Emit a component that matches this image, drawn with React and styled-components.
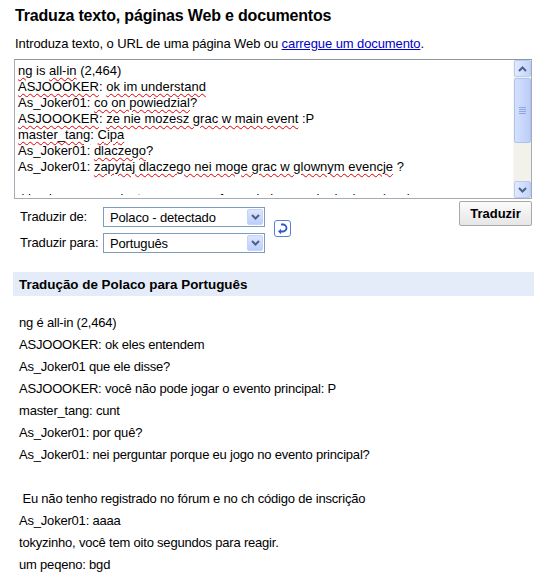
import React from "react";
import styled, { createGlobalStyle } from "styled-components";

const GlobalStyle = createGlobalStyle`
  body {
    margin: 0;
    background: #fff;
    font-family: "Liberation Sans", Arial, sans-serif;
    color: #000;
  }
`;

const Page = styled.div`
  width: 534px;
  padding-left: 14px;
  box-sizing: border-box;
`;

const Title = styled.h1`
  margin: 6px 0 0 1px;
  font-size: 16px;
  line-height: 20px;
  font-weight: bold;
  letter-spacing: -0.18px;
`;

const Intro = styled.div`
  margin: 10px 0 0 1px;
  font-size: 13px;
  line-height: 16px;
  letter-spacing: -0.1px;
  a {
    color: #0000cc;
    text-decoration: underline;
  }
`;

const SourceBox = styled.div`
  margin-top: 7px;
  width: 518px;
  height: 140px;
  box-sizing: border-box;
  border: 1px solid #a5acb5;
  border-top-color: #8e959e;
  display: flex;
  overflow: hidden;
`;

const SourceText = styled.div`
  flex: 1;
  margin-bottom: 3px;
  padding: 3px 3px 0;
  font-size: 13px;
  line-height: 16px;
  white-space: pre;
  overflow: hidden;
`;

const Typo = styled.span`
  text-decoration: underline wavy #e00000;
  text-decoration-thickness: 1px;
  text-underline-offset: 2px;
`;

const Scrollbar = styled.div`
  width: 17px;
  display: flex;
  flex-direction: column;
  background: #f2f1ea;
  border-left: 1px solid #f6f6f2;
`;

const ScrollButton = styled.div`
  height: 17px;
  box-sizing: border-box;
  border: 1px solid #b9cbf3;
  border-radius: 2px;
  background: linear-gradient(to right, #e1eafe, #c2d3fc);
  display: flex;
  align-items: center;
  justify-content: center;
`;

const Thumb = styled.div`
  margin-top: 1px;
  height: 65px;
  box-sizing: border-box;
  border: 1px solid #aec2f1;
  border-radius: 2px;
  background: linear-gradient(to right, #d4e0fd, #bccdf9);
  display: flex;
  align-items: center;
  justify-content: center;
`;

const Track = styled.div`
  flex: 1;
`;

const Controls = styled.div`
  margin-top: 8px;
  display: flex;
  align-items: flex-start;
`;

const LangGrid = styled.div`
  display: grid;
  grid-template-columns: 83px 162px;
  row-gap: 6px;
  padding-left: 6px;
  align-items: center;
  font-size: 13px;
  letter-spacing: -0.15px;
`;

const Label = styled.span`
  line-height: 20px;
  white-space: nowrap;
`;

const Select = styled.div`
  height: 20px;
  box-sizing: border-box;
  border: 1px solid #7f9db9;
  display: flex;
  align-items: center;
  justify-content: space-between;
  padding: 0 1px 0 6px;
  font-size: 13px;
`;

const DropButton = styled.div`
  width: 16px;
  height: 16px;
  box-sizing: border-box;
  border: 1px solid #c3d3fd;
  border-radius: 2px;
  background: linear-gradient(#dbe6fe, #bccefb);
  display: flex;
  align-items: center;
  justify-content: center;
`;

const SwapButton = styled.div`
  margin: 13px 0 0 9px;
  width: 17px;
  height: 17px;
  box-sizing: border-box;
  border: 1px solid #5b7fd4;
  border-radius: 3px;
  background: #fff;
  display: flex;
  align-items: center;
  justify-content: center;
`;

const TranslateButton = styled.button`
  margin: -6px 2px 0 auto;
  width: 73px;
  height: 25px;
  border: 1px solid #a8a8a8;
  border-radius: 2px;
  background: linear-gradient(#fbfbfb, #e6e6e6);
  font-family: "Liberation Sans", Arial, sans-serif;
  font-size: 13px;
  font-weight: bold;
  color: #000;
  padding: 0;
`;

const ResultHeader = styled.div`
  margin: 19px 0 0 -1px;
  height: 24px;
  background: #e5ecf9;
  display: flex;
  align-items: center;
  padding-left: 6px;
  font-size: 13.4px;
  font-weight: bold;
`;

const ResultBody = styled.div`
  margin-top: 16px;
  padding-left: 5px;
  font-size: 13px;
  letter-spacing: -0.2px;
`;

const ResultLine = styled.div`
  line-height: 22px;
  height: 22px;
  white-space: pre;
`;

const Chevron = ({ up }) => (
  <svg width="9" height="6" viewBox="0 0 9 6">
    <path
      d={up ? "M1 5 L4.5 1.5 L8 5" : "M1 1 L4.5 4.5 L8 1"}
      fill="none"
      stroke="#4d6185"
      strokeWidth="2"
    />
  </svg>
);

const Grip = () => (
  <svg width="7" height="7" viewBox="0 0 7 7">
    {[0.5, 2.5, 4.5, 6.5].map((y) => (
      <line key={y} x1="0" x2="7" y1={y} y2={y} stroke="#8fa6e3" strokeWidth="1" />
    ))}
  </svg>
);

const SwapIcon = () => (
  <svg width="11" height="11" viewBox="0 0 11 11">
    <path d="M4 1.5 H6 A3.5 3.5 0 0 1 6 8.5 H3" fill="none" stroke="#2d5bc5" strokeWidth="1.8" />
    <path d="M1 8.5 L4 5.8 L4 11.2 Z" fill="#2d5bc5" />
  </svg>
);

const source = [
  [["ng", 1], [" is "], ["all-in", 1], [" (2,464)"]],
  [["ASJOOOKER", 1], [": "], ["ok im understand", 1]],
  [["As_Joker01: "], ["co on powiedzial", 1], ["?"]],
  [["ASJOOOKER", 1], [": "], ["ze nie mozesz grac w main event", 1], [" :P"]],
  [["master_tang", 1], [": "], ["Cipa", 1]],
  [["As_Joker01: "], ["dlaczego", 1], ["?"]],
  [["As_Joker01: "], ["zapytaj dlaczego nei moge grac w glownym evencje", 1], [" ?"]],
  [[" "]],
  [[" i ja nie mam zarejestrowanego na forum i nie mam kodu do wpisania"]],
  [["As_Joker01: aaaa"]],
];

const result = [
  "ng é all-in (2,464)",
  "ASJOOOKER: ok eles entendem",
  "As_Joker01 que ele disse?",
  "ASJOOOKER: você não pode jogar o evento principal: P",
  "master_tang: cunt",
  "As_Joker01: por quê?",
  "As_Joker01: nei perguntar porque eu jogo no evento principal?",
  "",
  " Eu não tenho registrado no fórum e no ch código de inscrição",
  "As_Joker01: aaaa",
  "tokyzinho, você tem oito segundos para reagir.",
  "um peqeno: bgd",
];

export default function App() {
  return (
    <Page>
      <GlobalStyle />
      <Title>Traduza texto, páginas Web e documentos</Title>
      <Intro>
        Introduza texto, o URL de uma página Web ou <a href="#">carregue um documento</a>.
      </Intro>

      <SourceBox>
        <SourceText>
          {source.map((line, i) => (
            <div key={i}>
              {line.map(([text, bad], j) =>
                bad ? <Typo key={j}>{text}</Typo> : <span key={j}>{text}</span>
              )}
            </div>
          ))}
        </SourceText>
        <Scrollbar>
          <ScrollButton>
            <Chevron up />
          </ScrollButton>
          <Thumb>
            <Grip />
          </Thumb>
          <Track />
          <ScrollButton>
            <Chevron />
          </ScrollButton>
        </Scrollbar>
      </SourceBox>

      <Controls>
        <LangGrid>
          <Label>Traduzir de:</Label>
          <Select>
            Polaco - detectado
            <DropButton>
              <Chevron />
            </DropButton>
          </Select>
          <Label>Traduzir para:</Label>
          <Select>
            Português
            <DropButton>
              <Chevron />
            </DropButton>
          </Select>
        </LangGrid>
        <SwapButton>
          <SwapIcon />
        </SwapButton>
        <TranslateButton>Traduzir</TranslateButton>
      </Controls>

      <ResultHeader>Tradução de Polaco para Português</ResultHeader>
      <ResultBody>
        {result.map((line, i) => (
          <ResultLine key={i}>{line}</ResultLine>
        ))}
      </ResultBody>
    </Page>
  );
}
